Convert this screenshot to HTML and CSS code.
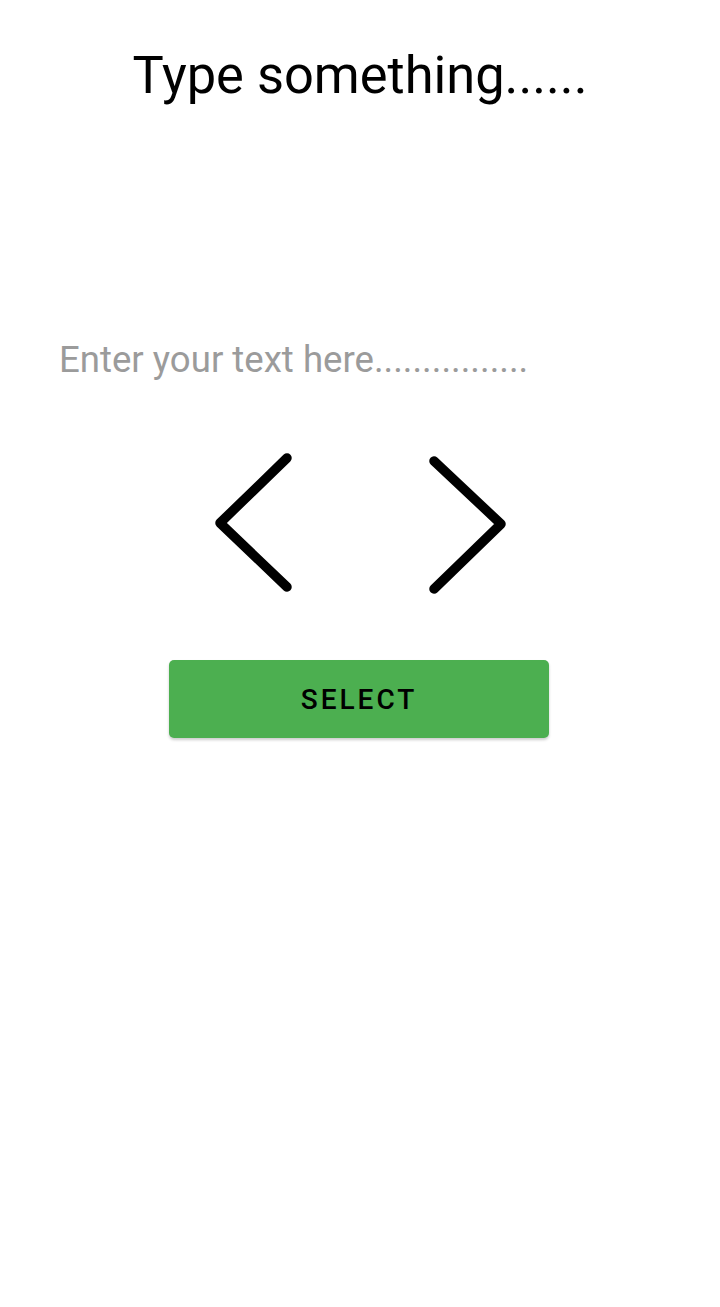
FILE: index.html
```html
<!DOCTYPE html>
<html>
<head>
<meta charset="utf-8">
<link rel="stylesheet" href="styles.css">
</head>
<body>
<div class="screen">
  <h1 class="title">Type something......</h1>
  <div class="field"><input class="input" type="text" placeholder="Enter your text here................"></div>
  <div class="arrows">
    <svg class="chev" width="100" height="150" viewBox="0 0 100 150"><polyline points="72,6 5,71 72,135" fill="none" stroke="#000" stroke-width="9.5" stroke-linecap="round" stroke-linejoin="round"/></svg>
    <svg class="chev" width="100" height="150" viewBox="0 0 100 150"><polyline points="19,9 86,72 19,137" fill="none" stroke="#000" stroke-width="9.5" stroke-linecap="round" stroke-linejoin="round"/></svg>
  </div>
  <button class="btn">SELECT</button>
</div>
</body>
</html>
```
FILE: styles.css
```css
html, body { margin: 0; padding: 0; background: #fff; }
body { font-family: Roboto, "Noto Sans", sans-serif; }
.screen { display: flex; flex-direction: column; align-items: center; width: 720px; height: 1307px; }
.title { margin: 40px 0 0; font-size: 52.4px; font-weight: 400; line-height: 70px; color: #000; }
.field { align-self: stretch; padding: 226px 0 0 59px; }
.input { border: none; outline: none; padding: 0; margin: 0; font-family: Roboto, sans-serif; font-size: 36.6px; line-height: 48px; height: 48px; width: 620px; background: transparent; color: #000; }
.input::placeholder { color: #9b9b9b; }
.arrows { display: flex; margin-top: 68px; width: 300px; justify-content: space-between; padding-left: 10px; }
.chev { display: block; }
.btn { margin-top: 58px; width: 380px; height: 78px; background: #4caf50; border: none; border-radius: 5px; font-family: Roboto, sans-serif; font-size: 28px; font-weight: 500; letter-spacing: 3px; color: #000; box-shadow: 0 2px 3px rgba(0,0,0,0.2); padding: 0; margin-left: -2px; }
```
